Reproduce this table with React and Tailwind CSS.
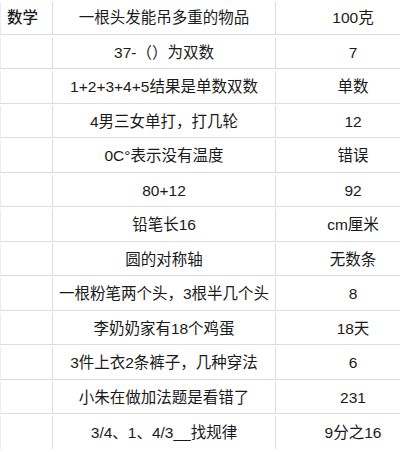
const rows = [
  ["数学", "一根头发能吊多重的物品", "100克"],
  ["", "37-（）为双数", "7"],
  ["", "1+2+3+4+5结果是单数双数", "单数"],
  ["", "4男三女单打，打几轮", "12"],
  ["", "0C°表示没有温度", "错误"],
  ["", "80+12", "92"],
  ["", "铅笔长16", "cm厘米"],
  ["", "圆的对称轴", "无数条"],
  ["", "一根粉笔两个头，3根半几个头", "8"],
  ["", "李奶奶家有18个鸡蛋", "18天"],
  ["", "3件上衣2条裤子，几种穿法", "6"],
  ["", "小朱在做加法题是看错了", "231"],
  ["", "3/4、1、4/3__找规律", "9分之16"],
];

export default function App() {
  return (
    <div
      className="h-[452px] w-[400px] overflow-hidden bg-white text-[15.5px] text-[#1a1a1a]"
      style={{ fontFamily: '"Liberation Sans", "Noto Sans CJK SC", sans-serif' }}
    >
      <div className="w-[430px]">
        {rows.map((r, i) => (
          <div
            key={i}
            className={`flex h-[34.5px] pt-[2px] ${i < rows.length - 1 ? "border-b border-[#dcdcdc]" : ""}`}
          >
            <div className="flex w-[52px] shrink-0 items-center border-l border-[#ececec] pl-[6px] font-medium">
              {r[0]}
            </div>
            <div className="flex w-[223px] shrink-0 items-center justify-center border-l border-[#dcdcdc] whitespace-nowrap">
              {r[1]}
            </div>
            <div className="flex flex-1 items-center justify-center border-l border-[#dcdcdc] whitespace-nowrap">
              {r[2]}
            </div>
          </div>
        ))}
      </div>
    </div>
  );
}
